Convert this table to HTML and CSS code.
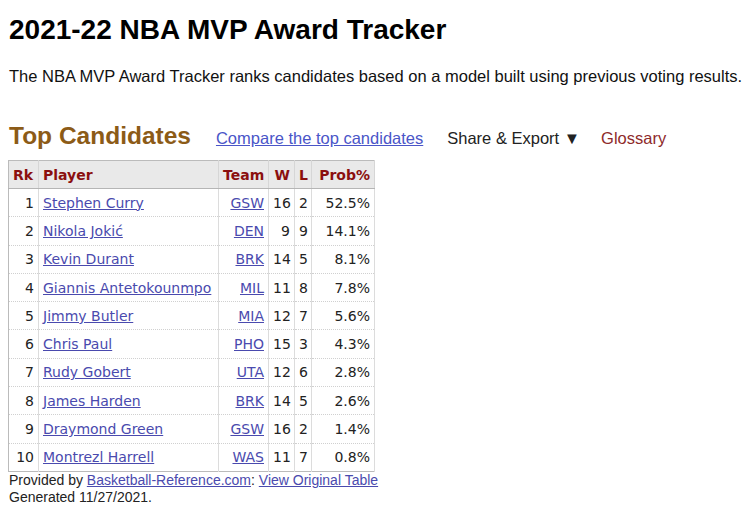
FILE: index.html
```html
<!DOCTYPE html>
<html>
<head>
<meta charset="utf-8">
<link rel="stylesheet" href="styles.css">
</head>
<body>
<div class="page">
  <h1 class="title">2021-22 NBA MVP Award Tracker</h1>
  <p class="intro">The NBA MVP Award Tracker ranks candidates based on a model built using previous voting results.</p>
  <div class="section-head">
    <h2 class="section-title">Top Candidates</h2>
    <a class="compare" href="#">Compare the top candidates</a>
    <span class="share">Share &amp; Export ▼</span>
    <span class="glossary">Glossary</span>
  </div>
  <table class="stats">
    <colgroup>
      <col class="c-rk"><col class="c-player"><col class="c-team"><col class="c-w"><col class="c-l"><col class="c-prob">
    </colgroup>
    <thead>
      <tr><th class="left">Rk</th><th class="left">Player</th><th>Team</th><th>W</th><th>L</th><th>Prob%</th></tr>
    </thead>
    <tbody>
      <tr><td class="num">1</td><td><a href="#">Stephen Curry</a></td><td class="num"><a href="#">GSW</a></td><td class="num">16</td><td>2</td><td class="num">52.5%</td></tr>
      <tr><td class="num">2</td><td><a href="#">Nikola Jokić</a></td><td class="num"><a href="#">DEN</a></td><td class="num">9</td><td>9</td><td class="num">14.1%</td></tr>
      <tr><td class="num">3</td><td><a href="#">Kevin Durant</a></td><td class="num"><a href="#">BRK</a></td><td class="num">14</td><td>5</td><td class="num">8.1%</td></tr>
      <tr><td class="num">4</td><td><a href="#">Giannis Antetokounmpo</a></td><td class="num"><a href="#">MIL</a></td><td class="num">11</td><td>8</td><td class="num">7.8%</td></tr>
      <tr><td class="num">5</td><td><a href="#">Jimmy Butler</a></td><td class="num"><a href="#">MIA</a></td><td class="num">12</td><td>7</td><td class="num">5.6%</td></tr>
      <tr><td class="num">6</td><td><a href="#">Chris Paul</a></td><td class="num"><a href="#">PHO</a></td><td class="num">15</td><td>3</td><td class="num">4.3%</td></tr>
      <tr><td class="num">7</td><td><a href="#">Rudy Gobert</a></td><td class="num"><a href="#">UTA</a></td><td class="num">12</td><td>6</td><td class="num">2.8%</td></tr>
      <tr><td class="num">8</td><td><a href="#">James Harden</a></td><td class="num"><a href="#">BRK</a></td><td class="num">14</td><td>5</td><td class="num">2.6%</td></tr>
      <tr><td class="num">9</td><td><a href="#">Draymond Green</a></td><td class="num"><a href="#">GSW</a></td><td class="num">16</td><td>2</td><td class="num">1.4%</td></tr>
      <tr><td class="num">10</td><td><a href="#">Montrezl Harrell</a></td><td class="num"><a href="#">WAS</a></td><td class="num">11</td><td>7</td><td class="num">0.8%</td></tr>
    </tbody>
  </table>
  <div class="footer">
    <div>Provided by <a href="#">Basketball-Reference.com</a>: <a href="#">View Original Table</a></div>
    <div>Generated 11/27/2021.</div>
  </div>
</div>
</body>
</html>
```

FILE: styles.css
```css
html, body {
  margin: 0;
  padding: 0;
  background: #fff;
}
.page {
  padding: 14px 0 0 9px;
  font-family: "Liberation Sans", Arial, sans-serif;
  color: #111;
}
.title {
  margin: 0;
  font-size: 28px;
  line-height: 32px;
  font-weight: bold;
  color: #000;
}
.intro {
  margin: 20px 0 0 0;
  font-size: 16.5px;
  line-height: 20px;
  color: #111;
  white-space: nowrap;
}
.section-head {
  display: flex;
  align-items: baseline;
  margin-top: 36px;
  line-height: 28px;
}
.section-title {
  margin: 0;
  font-size: 24.5px;
  font-weight: bold;
  color: #8c5b17;
}
.compare {
  margin-left: 25px;
  font-size: 16.5px;
  color: #4a55c8;
}
.share {
  margin-left: 24px;
  font-size: 16.5px;
  color: #222;
}
.glossary {
  margin-left: 21px;
  font-size: 16.5px;
  color: #8e2a2a;
}
.stats {
  margin-top: 8px;
  margin-left: -1px;
  border-collapse: collapse;
  table-layout: fixed;
  width: 366px;
  font-family: "DejaVu Sans", Verdana, sans-serif;
  font-size: 14px;
  color: #222;
  border: 1px solid #bbb;
}
.c-rk { width: 30px; }
.c-player { width: 180px; }
.c-team { width: 50px; }
.c-w { width: 26px; }
.c-l { width: 17px; }
.c-prob { width: 63px; }
.stats th {
  background: #e9e9e9;
  color: #8b0f0f;
  font-weight: bold;
  height: 27px;
  padding: 0 4px;
  text-align: right;
  border-right: 1px solid #d6d6d6;
  border-bottom: 1px solid #b5b5b5;
  white-space: nowrap;
}
.stats th.left { text-align: left; }
.stats td {
  height: 27.3px;
  padding: 0 4px;
  text-align: left;
  border-right: 1px solid #dcdcdc;
  border-bottom: 1px dotted #d0d0d0;
  white-space: nowrap;
}
.stats td.num { text-align: right; }
.stats a {
  color: #4a4aae;
  text-decoration: underline;
}
.footer {
  margin-top: 0;
  font-size: 14px;
  line-height: 17px;
  color: #222;
}
.footer a {
  color: #4a4aae;
}
```
